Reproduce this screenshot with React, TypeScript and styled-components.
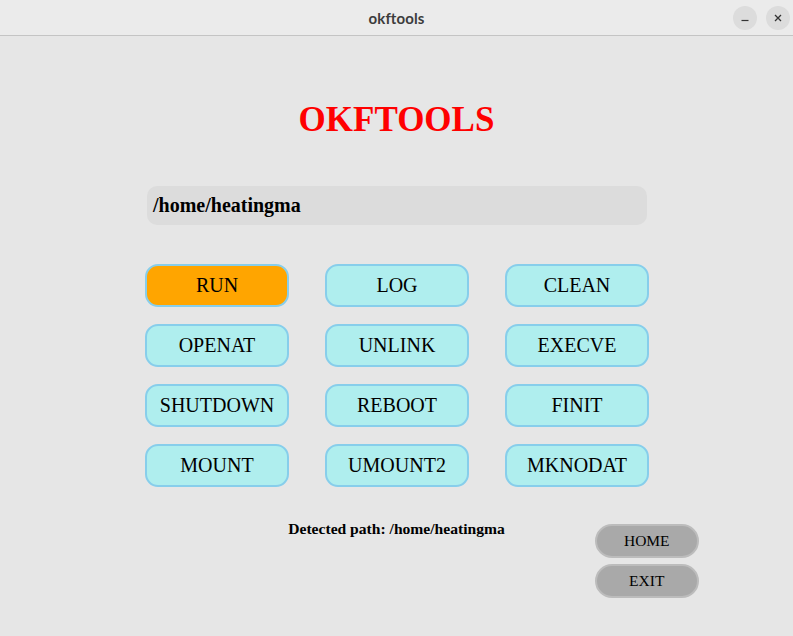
import React from "react";
import styled, { createGlobalStyle } from "styled-components";

const Global = createGlobalStyle`
  html, body { margin: 0; padding: 0; background: #e6e6e6; }
  body { width: 793px; height: 636px; overflow: hidden; }
  * { box-sizing: border-box; }
`;

const Window = styled.div`
  width: 793px;
  height: 636px;
  display: flex;
  flex-direction: column;
  background: #e6e6e6;
`;

const TitleBar = styled.div`
  height: 36px;
  flex: none;
  display: grid;
  grid-template-columns: 1fr auto 1fr;
  align-items: center;
  background: #ebebeb;
  border-bottom: 1px solid #c4c4c4;
`;

const TitleText = styled.div`
  grid-column: 2;
  font-family: "Lato", "DejaVu Sans", sans-serif;
  font-weight: 700;
  font-size: 15px;
  color: #3c3c3c;
  letter-spacing: 0.1px;
`;

const WinControls = styled.div`
  grid-column: 3;
  justify-self: end;
  display: flex;
  gap: 9px;
  padding-right: 3px;
`;

const WinButton = styled.div`
  width: 24px;
  height: 24px;
  border-radius: 50%;
  background: #dcdcdc;
  display: flex;
  align-items: center;
  justify-content: center;
  color: #333;
`;

const Main = styled.div`
  flex: 1;
  display: flex;
  flex-direction: column;
  align-items: center;
`;

const Heading = styled.h1`
  margin: 64px 0 0;
  height: 40px;
  line-height: 40px;
  font-family: "Liberation Serif", serif;
  font-weight: 700;
  font-size: 35px;
  color: #ff0000;
`;

const PathField = styled.div`
  margin-top: 46px;
  margin-left: 1px;
  width: 500px;
  height: 39px;
  border-radius: 10px;
  background: #dcdcdc;
  display: flex;
  align-items: center;
  padding-left: 6px;
  font-family: "Liberation Serif", serif;
  font-weight: 700;
  font-size: 20px;
  color: #000;
`;

const Grid = styled.div`
  margin-top: 39px;
  margin-left: 1px;
  width: 504px;
  display: grid;
  grid-template-columns: repeat(3, 1fr);
  column-gap: 36px;
  row-gap: 17px;
`;

const ActionButton = styled.button<{ $active?: boolean }>`
  height: 43px;
  border: 2px solid #87ceeb;
  border-radius: 13px;
  background: ${(p) => (p.$active ? "#ffa500" : "#afeeee")};
  font-family: "Liberation Serif", serif;
  font-size: 20px;
  color: #000;
  padding: 0;
  display: flex;
  align-items: center;
  justify-content: center;
`;

const Bottom = styled.div`
  margin-top: 33px;
  width: 100%;
  display: grid;
  grid-template-columns: 1fr auto 1fr;
  align-items: start;
`;

const Detected = styled.div`
  grid-column: 2;
  font-family: "Liberation Serif", serif;
  font-weight: 700;
  font-size: 15.6px;
  line-height: 18px;
  color: #000;
`;

const SideButtons = styled.div`
  grid-column: 3;
  display: flex;
  flex-direction: column;
  gap: 6px;
  padding-top: 4px;
  padding-left: 90px;
`;

const GrayButton = styled.button`
  width: 104px;
  height: 34px;
  border: 2px solid #bcbcbc;
  border-radius: 17px;
  background: #a9a9a9;
  font-family: "Liberation Serif", serif;
  font-size: 15.5px;
  color: #000;
  padding: 0;
`;

const actions = [
  "RUN", "LOG", "CLEAN",
  "OPENAT", "UNLINK", "EXECVE",
  "SHUTDOWN", "REBOOT", "FINIT",
  "MOUNT", "UMOUNT2", "MKNODAT",
];

export default function App() {
  return (
    <>
      <Global />
      <Window>
        <TitleBar>
          <TitleText>okftools</TitleText>
          <WinControls>
            <WinButton>
              <svg width="10" height="10" viewBox="0 0 10 10">
                <line x1="1.5" y1="7.5" x2="8.5" y2="7.5" stroke="#333" strokeWidth="1.2" />
              </svg>
            </WinButton>
            <WinButton>
              <svg width="10" height="10" viewBox="0 0 10 10">
                <path d="M2 2 L8 8 M8 2 L2 8" stroke="#333" strokeWidth="1.3" />
              </svg>
            </WinButton>
          </WinControls>
        </TitleBar>
        <Main>
          <Heading>OKFTOOLS</Heading>
          <PathField>/home/heatingma</PathField>
          <Grid>
            {actions.map((a) => (
              <ActionButton key={a} $active={a === "RUN"}>
                {a}
              </ActionButton>
            ))}
          </Grid>
          <Bottom>
            <Detected>Detected path: /home/heatingma</Detected>
            <SideButtons>
              <GrayButton>HOME</GrayButton>
              <GrayButton>EXIT</GrayButton>
            </SideButtons>
          </Bottom>
        </Main>
      </Window>
    </>
  );
}
